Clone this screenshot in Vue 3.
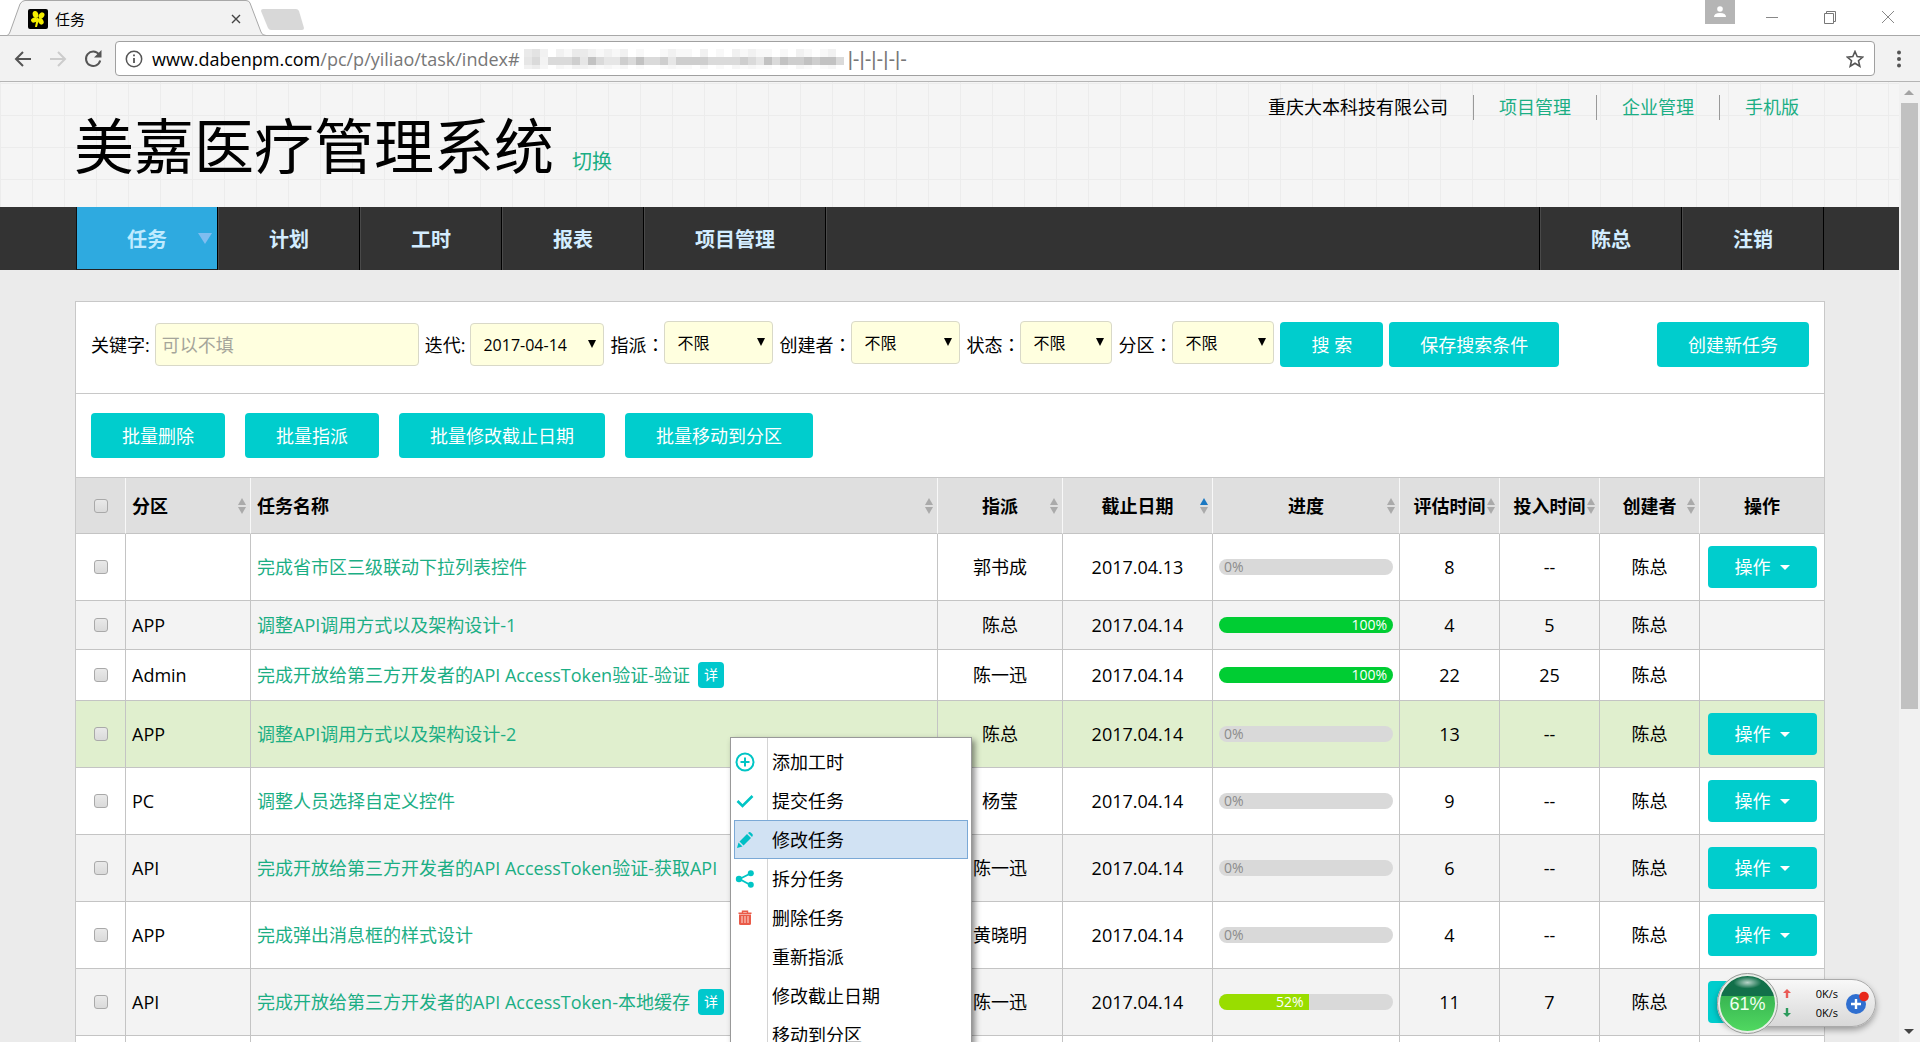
<script setup>
import { ref } from 'vue'

const keyword = ref('')
const iteration = ref('2017-04-14')

const filters = [
  { id: 'assignee', label: '指派', size: 'w-lg' },
  { id: 'creator', label: '创建者', size: 'w-lg' },
  { id: 'status', label: '状态', size: 'w-sm' },
  { id: 'section', label: '分区', size: 'w-md' },
]

const batchActions = ['批量删除', '批量指派', '批量修改截止日期', '批量移动到分区']

const columns = [
  { name: '分区', cls: 'left', sort: 'both' },
  { name: '任务名称', cls: 'left', sort: 'both' },
  { name: '指派', sort: 'both' },
  { name: '截止日期', sort: 'asc' },
  { name: '进度', sort: 'both' },
  { name: '评估时间', sort: 'both' },
  { name: '投入时间', sort: 'both' },
  { name: '创建者', sort: 'both' },
  { name: '操作', sort: '' },
]

const tasks = [
  { section: '', name: '完成省市区三级联动下拉列表控件', who: '郭书成', due: '2017.04.13', pct: 0, est: '8', spent: '--', by: '陈总', op: true },
  { section: 'APP', name: '调整API调用方式以及架构设计-1', who: '陈总', due: '2017.04.14', pct: 100, est: '4', spent: '5', by: '陈总', op: false },
  { section: 'Admin', name: '完成开放给第三方开发者的API AccessToken验证-验证', detail: true, who: '陈一迅', due: '2017.04.14', pct: 100, est: '22', spent: '25', by: '陈总', op: false },
  { section: 'APP', name: '调整API调用方式以及架构设计-2', who: '陈总', due: '2017.04.14', pct: 0, est: '13', spent: '--', by: '陈总', op: true, active: true },
  { section: 'PC', name: '调整人员选择自定义控件', who: '杨莹', due: '2017.04.14', pct: 0, est: '9', spent: '--', by: '陈总', op: true },
  { section: 'API', name: '完成开放给第三方开发者的API AccessToken验证-获取API', who: '陈一迅', due: '2017.04.14', pct: 0, est: '6', spent: '--', by: '陈总', op: true },
  { section: 'APP', name: '完成弹出消息框的样式设计', who: '黄晓明', due: '2017.04.14', pct: 0, est: '4', spent: '--', by: '陈总', op: true },
  { section: 'API', name: '完成开放给第三方开发者的API AccessToken-本地缓存', detail: true, who: '陈一迅', due: '2017.04.14', pct: 52, est: '11', spent: '7', by: '陈总', op: true },
]

const menu = [
  { text: '添加工时', icon: 'plus' },
  { text: '提交任务', icon: 'check' },
  { text: '修改任务', icon: 'pencil', active: true },
  { text: '拆分任务', icon: 'share' },
  { text: '删除任务', icon: 'trash' },
  { text: '重新指派' },
  { text: '修改截止日期' },
  { text: '移动到分区' },
]

// grey levels of the masked part of the address, one digit per block
const maskTop = '3420213321212010012110201021211010210120'
const maskMid = '2313334253224353342444433334325354454553'
</script>

<template>
  <div class="window">
    <div class="tabstrip">
      <div class="tab">
        <svg class="tab-shape" width="308" height="36" viewBox="0 0 308 36">
          <path d="M0 35.500H7Q9 35 10 32L20 4Q22 .5 25 .5H246Q249 .5 250 3L261 32Q262 35.500 266 35.500H308" fill="#f2f2f2" stroke="#a8a8a8" />
          <path d="M266 35.500H308V36H0V35.500" fill="#a8a8a8" />
          <path d="M263 9H296Q298 9 299 11L304 28Q304 30 302 30H271Q269 30 268 28L261 11Q261 9 263 9Z" fill="#d8d8d8" />
        </svg>
        <svg class="favicon" width="20" height="20" viewBox="0 0 20 20">
          <rect width="20" height="20" rx="2" fill="#000" />
          <g fill="#f4ee00">
            <ellipse cx="7.500" cy="5.500" rx="2.800" ry="3.500" transform="rotate(-15 7.500 5.500)" />
            <ellipse cx="13.500" cy="6.500" rx="2.600" ry="3.400" transform="rotate(35 13.500 6.500)" />
            <ellipse cx="6.200" cy="11" rx="3.200" ry="2.500" transform="rotate(-20 6.200 11)" />
            <ellipse cx="12.800" cy="12.300" rx="2.600" ry="3.500" transform="rotate(-30 12.800 12.300)" />
            <path d="M9 8L11 10L9 18H7Z" />
          </g>
        </svg>
        <span class="tab-title">任务</span>
        <button class="tab-close" aria-label="关闭标签页">
          <svg width="10" height="10" viewBox="0 0 10 10"><path d="M1 1L9 9M9 1L1 9" stroke="#444" stroke-width="1.400" /></svg>
        </button>
      </div>
      <div class="controls">
        <button class="profile" aria-label="用户">
          <svg width="12" height="12" viewBox="0 0 12 12" fill="#fff"><circle cx="6" cy="3" r="2.800" /><path d="M0 11Q0 7 6 7T12 11Z" /></svg>
        </button>
        <button aria-label="最小化"><svg width="14" height="14" viewBox="0 0 14 14"><path d="M1 7.500H13" stroke="#888" /></svg></button>
        <button aria-label="还原"><svg width="14" height="14" viewBox="0 0 14 14" fill="none" stroke="#777"><path d="M1.500 3.500H10.500V13.500H1.500ZM3.500 3.500V1.500H12.500V11.500H10.500" /></svg></button>
        <button aria-label="关闭"><svg width="14" height="14" viewBox="0 0 14 14"><path d="M1 1L13 13M13 1L1 13" stroke="#888" /></svg></button>
      </div>
    </div>

    <div class="toolbar">
      <button aria-label="后退"><svg width="18" height="18" viewBox="0 0 18 18" fill="none" stroke="#555" stroke-width="2"><path d="M17 9H2M9 2L2 9L9 16" /></svg></button>
      <button aria-label="前进"><svg width="18" height="18" viewBox="0 0 18 18" fill="none" stroke="#ccc" stroke-width="2"><path d="M1 9H16M9 2L16 9L9 16" /></svg></button>
      <button aria-label="刷新"><svg width="18" height="18" viewBox="0 0 18 18"><path d="M15 4.500A7.200 7.200 0 1 0 16.200 10.500" fill="none" stroke="#555" stroke-width="2" /><path d="M17.500 0V7.500H10Z" fill="#555" /></svg></button>
      <div class="address">
        <svg width="18" height="18" viewBox="0 0 18 18"><circle cx="9" cy="9" r="7.700" fill="none" stroke="#555" stroke-width="1.500" /><path d="M9 8V13M9 4.500V6.300" stroke="#555" stroke-width="1.800" /></svg>
        <span class="url"><span class="host">www.dabenpm.com</span>/pc/p/yiliao/task/index#</span>
        <svg class="mask" width="324" height="20" viewBox="0 0 324 20">
          <rect v-for="(d, i) in maskTop" :key="'t' + i" :x="i * 8" y="0" width="8" height="8" fill="#888" :fill-opacity="d * 0.06" />
          <rect v-for="(d, i) in maskMid" :key="'m' + i" :x="i * 8" y="8" width="8" height="8" fill="#777" :fill-opacity="d * 0.09" />
          <rect v-for="(d, i) in maskTop" :key="'b' + i" :x="i * 8" y="16" width="8" height="4" fill="#888" :fill-opacity="d * 0.04" />
        </svg>
        <span class="tail">|-|-|-|-|-</span>
        <svg class="star" width="18" height="18" viewBox="0 0 18 18"><path d="M9 1.500L11.200 6.600L16.700 7.100L12.500 10.700L13.800 16.200L9 13.200L4.200 16.200L5.500 10.700L1.300 7.100L6.800 6.600Z" fill="none" stroke="#555" stroke-width="1.600" /></svg>
      </div>
      <button aria-label="菜单"><svg width="6" height="20" viewBox="0 0 6 20" fill="#555"><circle cx="3" cy="3.500" r="2" /><circle cx="3" cy="10" r="2" /><circle cx="3" cy="16.500" r="2" /></svg></button>
    </div>

    <div class="body">
      <div class="page">
        <header class="head">
          <div class="brand">
            <h1>美嘉医疗管理系统</h1>
            <a href="#">切换</a>
          </div>
          <div class="links">
            <span>重庆大本科技有限公司</span>
            <a href="#">项目管理</a>
            <a href="#">企业管理</a>
            <a href="#">手机版</a>
          </div>
        </header>

        <nav class="nav">
          <a href="#" class="on">任务<i class="drop"></i></a>
          <a href="#">计划</a>
          <a href="#">工时</a>
          <a href="#">报表</a>
          <a href="#">项目管理</a>
          <span class="space"></span>
          <a href="#">陈总</a>
          <a href="#">注销</a>
        </nav>

        <main class="panel">
          <form class="filter" @submit.prevent>
            <div class="field">
              <label for="keyword">关键字:</label>
              <input id="keyword" v-model="keyword" type="text" placeholder="可以不填">
            </div>
            <div class="field">
              <label for="iteration">迭代:</label>
              <span class="pick w-xl"><select id="iteration" v-model="iteration"><option>2017-04-14</option></select></span>
            </div>
            <div v-for="f in filters" :key="f.id" class="field tight">
              <label :for="f.id">{{ f.label }}<span class="colon">：</span></label>
              <span class="pick raised" :class="f.size"><select :id="f.id"><option>不限</option></select></span>
            </div>
            <button class="btn" type="submit">搜 索</button>
            <button class="btn" type="button">保存搜索条件</button>
            <button class="btn create" type="button">创建新任务</button>
          </form>

          <div class="batch">
            <button v-for="b in batchActions" :key="b" class="btn">{{ b }}</button>
          </div>

          <table>
            <colgroup>
              <col class="c-check"><col class="c-section"><col><col class="c-section"><col class="c-due">
              <col class="c-progress"><col class="c-num"><col class="c-num"><col class="c-num"><col class="c-op">
            </colgroup>
            <thead>
              <tr>
                <th><input type="checkbox" aria-label="全选"></th>
                <th v-for="c in columns" :key="c.name" :class="c.cls">
                  {{ c.name }}
                  <svg v-if="c.sort" class="sort" width="8" height="16" viewBox="0 0 8 16">
                    <path d="M4 0L8 7H0Z" :fill="c.sort === 'asc' ? '#1a78c2' : '#aaa'" />
                    <path d="M4 16L0 9H8Z" fill="#aaa" />
                  </svg>
                </th>
              </tr>
            </thead>
            <tbody>
              <tr v-for="(t, i) in tasks" :key="i" :class="{ active: t.active }">
                <td><input type="checkbox" :aria-label="t.name"></td>
                <td class="left">{{ t.section }}</td>
                <td class="left"><div class="name"><a href="#">{{ t.name }}</a><span v-if="t.detail" class="badge">详</span></div></td>
                <td>{{ t.who }}</td>
                <td>{{ t.due }}</td>
                <td>
                  <div class="bar">
                    <div v-if="t.pct" class="fill" :class="{ part: t.pct < 100 }" :style="{ width: t.pct + '%' }">{{ t.pct }}%</div>
                    <span v-else>0%</span>
                  </div>
                </td>
                <td>{{ t.est }}</td>
                <td>{{ t.spent }}</td>
                <td>{{ t.by }}</td>
                <td><button v-if="t.op" class="op">操作<i class="caret"></i></button></td>
              </tr>
              <tr class="next"><td v-for="n in 10" :key="n"></td></tr>
            </tbody>
          </table>
        </main>
      </div>

      <div class="scrollbar">
        <i class="arrow up"></i>
        <div class="track"><div class="thumb"></div></div>
        <i class="arrow down"></i>
      </div>
    </div>

    <ul class="menu">
      <li v-for="m in menu" :key="m.text">
        <button :class="{ active: m.active }">
          <span class="icon">
            <svg v-if="m.icon === 'plus'" width="20" height="20" viewBox="0 0 20 20" fill="none" stroke="#00c5c5" stroke-width="2"><circle cx="10" cy="10" r="8.500" /><path d="M10 5.500V14.500M5.500 10H14.500" /></svg>
            <svg v-else-if="m.icon === 'check'" width="20" height="20" viewBox="0 0 20 20" fill="none" stroke="#00c5c5" stroke-width="2.600"><path d="M2.500 10L7.500 15L17.500 5" /></svg>
            <svg v-else-if="m.icon === 'pencil'" width="20" height="20" viewBox="0 0 20 20" fill="#00bfc5"><path d="M2 18L3.500 12.500L7.500 16.500ZM4.500 11.500L12 4L16 8L8.500 15.500ZM13 3L14 2.300Q15 1.800 16 2.700L17.400 4.100Q18.200 5 17.600 6L17 7Z" /></svg>
            <svg v-else-if="m.icon === 'share'" width="20" height="20" viewBox="0 0 20 20" fill="#00c5c5"><path d="M15.500 4.500L4.500 10L15.500 16" fill="none" stroke="#00c5c5" stroke-width="1.800" /><circle cx="4" cy="10" r="3.200" /><circle cx="15.800" cy="4.300" r="3" /><circle cx="15.800" cy="15.700" r="3" /></svg>
            <svg v-else-if="m.icon === 'trash'" width="20" height="20" viewBox="0 0 20 20"><path d="M4 6.500H16V15.500Q16 17 14.500 17H5.500Q4 17 4 15.500Z" fill="#ea5a48" /><path d="M3.500 5.300H16.500M7.500 5V3.300H12.500V5" fill="none" stroke="#ea5a48" stroke-width="1.400" /><path d="M7 8V15M10 8V15M13 8V15" stroke="#fbc9c0" stroke-width="1.200" /></svg>
          </span>
          {{ m.text }}
        </button>
      </li>
    </ul>

    <aside class="monitor">
      <div class="ball">61%</div>
      <div class="rates">
        <div><svg width="8" height="9" viewBox="0 0 8 9"><path d="M4 0L8 4H5.200V9H2.800V4H0Z" fill="#ea5a55" /></svg><span>0K/s</span></div>
        <div><svg width="8" height="9" viewBox="0 0 8 9"><path d="M4 9L0 5H2.800V0H5.200V5H8Z" fill="#2c9a5c" /></svg><span>0K/s</span></div>
      </div>
      <svg class="boost" width="26" height="28" viewBox="0 0 26 28">
        <circle cx="11" cy="16" r="10" fill="#2f6fd0" />
        <path d="M11 11V21M6 16H16" stroke="#fff" stroke-width="2.400" />
        <circle cx="19" cy="8.500" r="4.800" fill="#e8271b" />
      </svg>
    </aside>
  </div>
</template>

<style>
body {
  overflow: hidden;
}
</style>

<style scoped>
* {
  box-sizing: border-box;
}
.window {
  position: relative;
  display: flex;
  flex-direction: column;
  height: 100vh;
  overflow: hidden;
  background: #fff;
  color: #000;
  font: 18px/24px "Open Sans", "Noto Sans CJK SC", sans-serif;
}
button {
  padding: 0;
  border: 0;
  background: none;
  color: inherit;
  font: inherit;
}
a {
  color: #1bae84;
  text-decoration: none;
}
svg {
  display: block;
  flex: none;
}

/* browser chrome */
.tabstrip {
  display: flex;
  justify-content: space-between;
  height: 36px;
  flex: none;
  border-bottom: 1px solid #a8a8a8;
}
.tab {
  position: relative;
  display: flex;
  align-items: center;
  width: 241px;
  height: 38px;
  padding-left: 28px;
  font-size: 15px;
}
.tab-shape {
  position: absolute;
  left: 0;
  top: 0;
}
.favicon,
.tab-title,
.tab-close {
  position: relative;
}
.tab-title {
  margin-left: 7px;
}
.tab-close {
  margin-left: auto;
}
.controls {
  display: flex;
  padding-right: 3px;
}
.controls button {
  display: flex;
  align-items: center;
  justify-content: center;
  width: 58px;
  height: 34px;
}
.controls .profile {
  width: 30px;
  height: 24px;
  margin-right: 8px;
  background: #b5b5b5;
}
.toolbar {
  display: flex;
  align-items: center;
  gap: 17px;
  height: 46px;
  flex: none;
  padding: 0 18px 0 14px;
  background: #f2f2f2;
  border-bottom: 1px solid #b4b4b4;
}
.address {
  display: flex;
  flex: 1;
  align-items: center;
  height: 35px;
  margin: 0 4px 0 -4px;
  padding: 0 10px 0 9px;
  background: #fff;
  border: 1px solid #a0a0a0;
  border-radius: 4px;
}
.url {
  margin-left: 9px;
  color: #777;
}
.host {
  color: #000;
}
.mask {
  margin-left: 4px;
}
.tail {
  color: #777;
  font-family: "Liberation Sans", sans-serif;
  font-size: 20px;
}
.star {
  margin-left: auto;
}

/* page frame */
.body {
  display: flex;
  flex: 1;
  min-height: 0;
}
.page {
  flex: 1;
  min-width: 0;
  overflow: hidden;
  background: #ebebeb;
}
.scrollbar {
  display: flex;
  flex-direction: column;
  width: 21px;
  background: #f1f1f1;
}
.track {
  flex: 1;
  padding: 0 2px;
}
.thumb {
  height: 66%;
  background: #c1c1c1;
}
.arrow {
  height: 21px;
  background: #a3a3a3;
  clip-path: polygon(10px 8px, 15px 13px, 5px 13px);
}
.arrow.down {
  background: #444;
  clip-path: polygon(5px 8px, 15px 8px, 10px 13px);
}

.head {
  display: flex;
  justify-content: space-between;
  height: 125px;
  padding: 0 75px 0 74px;
  background:
    linear-gradient(90deg, transparent 31px, #ececec 31px) 1px 0 / 32px 32px,
    linear-gradient(transparent 31px, #ececec 31px) 0 2px / 32px 32px,
    #f5f5f5;
}
.brand {
  display: flex;
  align-items: baseline;
  gap: 18px;
  padding-top: 19px;
  font-size: 20px;
}
h1 {
  margin: 0;
  font-size: 60px;
  font-weight: 400;
  line-height: 90px;
}
.links {
  display: flex;
  padding: 13px 0 0;
}
.links > * {
  height: 25px;
  padding: 0 25px;
  border-left: 1px solid #999;
  line-height: 24px;
}
.links > :first-child {
  border-left: 0;
}

.nav {
  display: flex;
  height: 63px;
  padding: 0 75px 0 76px;
  background: #333;
}
.nav a {
  position: relative;
  padding: 0 50px;
  border-left: 1px solid #4a4a4a;
  border-right: 1px solid #000;
  color: #d3edff;
  font-size: 20px;
  font-weight: 700;
  line-height: 66px;
}
.nav .space {
  flex: 1;
  border-left: 1px solid #4a4a4a;
  border-right: 1px solid #000;
}
.nav .on {
  border-left-color: #111;
  border-bottom: 1px solid #222;
  background: #2eaae0;
  color: #c0ebff;
}
.drop {
  position: absolute;
  right: 5px;
  top: 26px;
  border: 7px solid transparent;
  border-top: 11px solid #7fbdf0;
  border-bottom: 0;
}

/* task panel */
.panel {
  margin: 31px 74px 0 75px;
  border: 1px solid #c8c8c8;
  border-bottom: 0;
  background: #fff;
}
.filter {
  display: flex;
  align-items: center;
  gap: 6px;
  padding: 19px 15px 25px;
  border-bottom: 1px solid #c8c8c8;
}
.field {
  display: flex;
  align-items: center;
  gap: 5px;
  white-space: nowrap;
}
.field.tight {
  gap: 0;
}
.colon {
  font-family: "Noto Sans CJK TC", sans-serif;
}
.filter input,
.filter select {
  height: 43px;
  border: 1px solid #d9d9c8;
  border-radius: 4px;
  background: #ffffdf;
  color: #000;
  font: inherit;
}
.filter input {
  width: 264px;
  padding: 0 6px;
}
.filter input::placeholder {
  color: #a5a59a;
}
.pick {
  position: relative;
}
.pick select {
  appearance: none;
  display: block;
  width: 100%;
  padding: 0 12px;
  font-size: 16px;
}
.pick::after {
  content: "";
  position: absolute;
  right: 8px;
  top: 17px;
  border: 4px solid transparent;
  border-top: 8px solid #000;
  border-bottom: 0;
}
.raised {
  margin-bottom: 4px;
}
.w-sm { width: 92px; }
.w-md { width: 102px; }
.w-lg { width: 109px; }
.w-xl { width: 134px; }
.btn {
  height: 45px;
  padding: 0 31px;
  border-radius: 4px;
  background: #00cdcd;
  color: #fff;
  white-space: nowrap;
}
.create {
  margin-left: auto;
}
.batch {
  display: flex;
  gap: 20px;
  padding: 19px 15px;
  border-bottom: 1px solid #c8c8c8;
}

table {
  width: 100%;
  table-layout: fixed;
  border-collapse: separate;
  border-spacing: 0;
}
.c-check { width: 50px; }
.c-section { width: 125px; }
.c-due { width: 150px; }
.c-progress { width: 187px; }
.c-num { width: 100px; }
.c-op { width: 124px; }
th,
td {
  padding: 12px 6px;
  border-right: 1px solid #c4c4c4;
  border-bottom: 1px solid #c4c4c4;
  text-align: center;
}
th:last-child,
td:last-child {
  border-right: 0;
}
th {
  position: relative;
  height: 56px;
  background: #dfdfdf;
  border-right-color: #f8f8f8;
  font-weight: 700;
  white-space: nowrap;
}
.left {
  text-align: left;
}
.sort {
  position: absolute;
  right: 4px;
  top: 20px;
}
tbody tr:nth-child(even) {
  background: #f3f3f3;
}
tbody tr.active {
  background: #e0efce;
}
.next td {
  height: 67px;
}
input[type="checkbox"] {
  appearance: none;
  display: block;
  width: 14px;
  height: 14px;
  margin: 0 auto;
  border: 1px solid #a9a9a9;
  border-radius: 3px;
  background: linear-gradient(#e9e9e9, #dadada);
}
.name {
  display: flex;
  align-items: center;
  gap: 8px;
  overflow: hidden;
  white-space: nowrap;
}
.badge {
  padding: 0 6px;
  border-radius: 4px;
  background: #00c8cd;
  color: #fff;
  font-size: 14px;
  line-height: 26px;
}
.bar {
  height: 16px;
  overflow: hidden;
  border-radius: 8px;
  background: #d9d9d9;
  color: #8c8c8c;
  font-size: 14px;
  line-height: 16px;
  text-align: left;
}
.bar span {
  padding-left: 5px;
}
.fill {
  padding-right: 6px;
  background: #00cd33;
  color: #fff;
  text-align: right;
}
.fill.part {
  background: #99dd00;
}
.op {
  display: flex;
  align-items: center;
  justify-content: center;
  gap: 9px;
  width: 109px;
  height: 42px;
  margin: 0 auto;
  border-radius: 4px;
  background: #00cdcd;
  color: #fff;
}
.caret {
  border: 5px solid transparent;
  border-top-color: #fff;
  border-bottom: 0;
}

/* context menu */
.menu {
  position: absolute;
  left: 730px;
  top: 737px;
  width: 242px;
  margin: 0;
  padding: 4px 3px;
  border: 1px solid #999;
  background: linear-gradient(90deg, transparent 36px, #d4d4d4 36px 37px, transparent 37px), #fff;
  box-shadow: 3px 3px 6px rgba(0, 0, 0, 0.45);
  list-style: none;
}
.menu button {
  display: flex;
  align-items: center;
  gap: 17px;
  width: 100%;
  height: 39px;
  border: 1px solid transparent;
}
.menu .active {
  border-color: #7ba9d6;
  background: #d1e2f3;
}
.icon {
  width: 20px;
  height: 20px;
}

/* system monitor */
.monitor {
  position: absolute;
  right: 44px;
  bottom: 15px;
  display: flex;
  align-items: center;
  height: 48px;
  border: 1px solid #aaa;
  border-radius: 24px;
  background: linear-gradient(#f8f8f8, #d8d8d8);
  box-shadow: 0 3px 6px rgba(0, 0, 0, 0.35);
}
.ball {
  width: 61px;
  height: 61px;
  margin-left: -1px;
  border: 3px solid #e8eee8;
  border-radius: 50%;
  outline: 1px solid #999;
  outline-offset: -1px;
  background:
    radial-gradient(ellipse 14px 6px at 50% 12%, rgba(255, 255, 255, 0.7), transparent),
    linear-gradient(#12704a 0 36%, #38b552 36%, #50d860);
  color: #f0fff0;
  font: 18px/56px "Liberation Sans", sans-serif;
  text-align: center;
}
.rates {
  width: 60px;
  padding-left: 5px;
  font-size: 11px;
  line-height: 19px;
}
.rates div {
  display: flex;
  align-items: center;
  justify-content: space-between;
}
.boost {
  margin: 0 4px 2px 7px;
}
</style>
